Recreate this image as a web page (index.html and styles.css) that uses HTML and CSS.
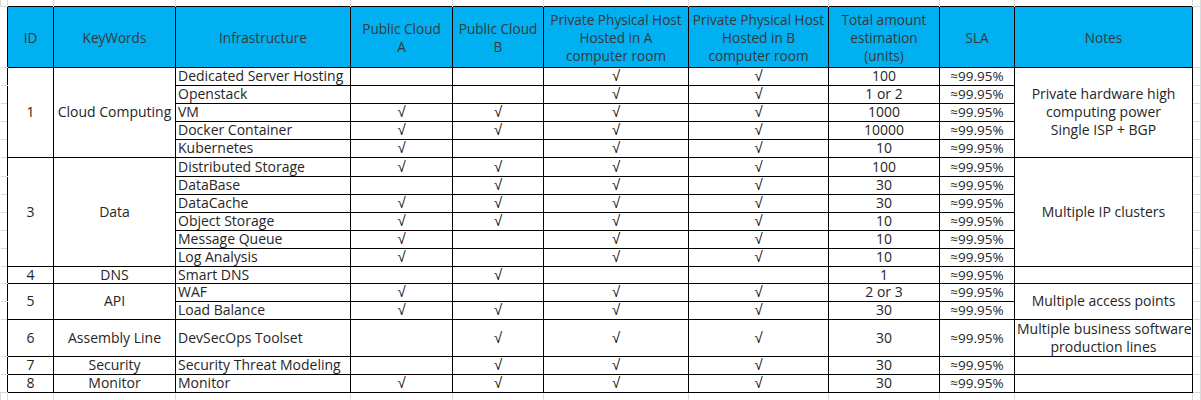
FILE: index.html
```html
<!DOCTYPE html>
<html>
<head>
<meta charset="utf-8">
<link rel="stylesheet" href="styles.css">
</head>
<body>
<table class="sheet">
<colgroup>
<col class="c-ml"><col class="c-id"><col class="c-kw"><col class="c-inf"><col class="c-pa"><col class="c-pb"><col class="c-ha"><col class="c-hb"><col class="c-tot"><col class="c-sla"><col class="c-note"><col class="c-mr">
</colgroup>
<tr class="r-top"><td class="mt"></td><td class="mt"></td><td class="mt"></td><td class="mt"></td><td class="mt"></td><td class="mt"></td><td class="mt"></td><td class="mt"></td><td class="mt"></td><td class="mt"></td><td class="mt"></td><td class="mt"></td></tr>
<tr class="r-head">
<td class="ml"></td>
<th>ID</th>
<th>KeyWords</th>
<th>Infrastructure</th>
<th>Public Cloud<br>A</th>
<th>Public Cloud<br>B</th>
<th>Private Physical Host<br>Hosted in A<br>computer room</th>
<th>Private Physical Host<br>Hosted in B<br>computer room</th>
<th>Total amount<br>estimation<br>(units)</th>
<th>SLA</th>
<th>Notes</th>
<td class="mr"></td>
</tr>

<tr><td class="ml"></td><td rowspan="5">1</td><td rowspan="5">Cloud Computing</td><td class="inf">Dedicated Server Hosting</td><td></td><td></td><td><span class="ck">√</span></td><td><span class="ck">√</span></td><td>100</td><td class="sla">≈99.95%</td><td rowspan="5" class="note">Private hardware high<br>computing power<br>Single ISP + BGP</td><td class="mr"></td></tr>
<tr><td class="ml"></td><td class="inf">Openstack</td><td></td><td></td><td><span class="ck">√</span></td><td><span class="ck">√</span></td><td>1 or 2</td><td class="sla">≈99.95%</td><td class="mr"></td></tr>
<tr><td class="ml"></td><td class="inf">VM</td><td><span class="ck">√</span></td><td><span class="ck">√</span></td><td><span class="ck">√</span></td><td><span class="ck">√</span></td><td>1000</td><td class="sla">≈99.95%</td><td class="mr"></td></tr>
<tr><td class="ml"></td><td class="inf">Docker Container</td><td><span class="ck">√</span></td><td><span class="ck">√</span></td><td><span class="ck">√</span></td><td><span class="ck">√</span></td><td>10000</td><td class="sla">≈99.95%</td><td class="mr"></td></tr>
<tr><td class="ml"></td><td class="inf">Kubernetes</td><td><span class="ck">√</span></td><td></td><td><span class="ck">√</span></td><td><span class="ck">√</span></td><td>10</td><td class="sla">≈99.95%</td><td class="mr"></td></tr>

<tr class="r19"><td class="ml"></td><td rowspan="6">3</td><td rowspan="6">Data</td><td class="inf">Distributed Storage</td><td><span class="ck">√</span></td><td><span class="ck">√</span></td><td><span class="ck">√</span></td><td><span class="ck">√</span></td><td>100</td><td class="sla">≈99.95%</td><td rowspan="6" class="note">Multiple IP clusters</td><td class="mr"></td></tr>
<tr><td class="ml"></td><td class="inf">DataBase</td><td></td><td><span class="ck">√</span></td><td><span class="ck">√</span></td><td><span class="ck">√</span></td><td>30</td><td class="sla">≈99.95%</td><td class="mr"></td></tr>
<tr><td class="ml"></td><td class="inf">DataCache</td><td><span class="ck">√</span></td><td><span class="ck">√</span></td><td><span class="ck">√</span></td><td><span class="ck">√</span></td><td>30</td><td class="sla">≈99.95%</td><td class="mr"></td></tr>
<tr><td class="ml"></td><td class="inf">Object Storage</td><td><span class="ck">√</span></td><td><span class="ck">√</span></td><td><span class="ck">√</span></td><td><span class="ck">√</span></td><td>10</td><td class="sla">≈99.95%</td><td class="mr"></td></tr>
<tr><td class="ml"></td><td class="inf">Message Queue</td><td><span class="ck">√</span></td><td></td><td><span class="ck">√</span></td><td><span class="ck">√</span></td><td>10</td><td class="sla">≈99.95%</td><td class="mr"></td></tr>
<tr><td class="ml"></td><td class="inf">Log Analysis</td><td><span class="ck">√</span></td><td></td><td><span class="ck">√</span></td><td><span class="ck">√</span></td><td>10</td><td class="sla">≈99.95%</td><td class="mr"></td></tr>

<tr class="r17"><td class="ml"></td><td>4</td><td>DNS</td><td class="inf">Smart DNS</td><td></td><td><span class="ck">√</span></td><td></td><td></td><td>1</td><td class="sla">≈99.95%</td><td class="note"></td><td class="mr"></td></tr>

<tr><td class="ml"></td><td rowspan="2">5</td><td rowspan="2">API</td><td class="inf">WAF</td><td><span class="ck">√</span></td><td></td><td><span class="ck">√</span></td><td><span class="ck">√</span></td><td>2 or 3</td><td class="sla">≈99.95%</td><td rowspan="2" class="note">Multiple access points</td><td class="mr"></td></tr>
<tr><td class="ml"></td><td class="inf">Load Balance</td><td><span class="ck">√</span></td><td><span class="ck">√</span></td><td><span class="ck">√</span></td><td><span class="ck">√</span></td><td>30</td><td class="sla">≈99.95%</td><td class="mr"></td></tr>

<tr class="r37"><td class="ml"></td><td>6</td><td>Assembly Line</td><td class="inf">DevSecOps Toolset</td><td></td><td><span class="ck">√</span></td><td><span class="ck">√</span></td><td><span class="ck">√</span></td><td>30</td><td class="sla">≈99.95%</td><td class="note">Multiple business software<br>production lines</td><td class="mr"></td></tr>

<tr><td class="ml"></td><td>7</td><td>Security</td><td class="inf">Security Threat Modeling</td><td></td><td><span class="ck">√</span></td><td><span class="ck">√</span></td><td><span class="ck">√</span></td><td>30</td><td class="sla">≈99.95%</td><td class="note"></td><td class="mr"></td></tr>
<tr><td class="ml"></td><td>8</td><td>Monitor</td><td class="inf">Monitor</td><td><span class="ck">√</span></td><td><span class="ck">√</span></td><td><span class="ck">√</span></td><td><span class="ck">√</span></td><td>30</td><td class="sla">≈99.95%</td><td class="note"></td><td class="mr"></td></tr>

<tr class="r-bottom"><td class="mb ml"></td><td class="mb"></td><td class="mb"></td><td class="mb"></td><td class="mb"></td><td class="mb"></td><td class="mb"></td><td class="mb"></td><td class="mb"></td><td class="mb"></td><td class="mb"></td><td class="mb mr"></td></tr>
</table>
</body>
</html>
```

FILE: styles.css
```css
body {
  margin: 0;
  background: #ffffff;
  font-family: "Open Sans", "Noto Sans", sans-serif;
  font-size: 14px;
  color: #262626;
}

.sheet {
  border-collapse: collapse;
  table-layout: fixed;
  width: 1200px;
}

.c-ml { width: 7px; }
.c-id { width: 46px; }
.c-kw { width: 122px; }
.c-inf { width: 175px; }
.c-pa { width: 102px; }
.c-pb { width: 91px; }
.c-ha { width: 145px; }
.c-hb { width: 140px; }
.c-tot { width: 111px; }
.c-sla { width: 75px; }
.c-note { width: 178px; }
.c-mr { width: 8px; }

.sheet tr { height: 18px; }
.sheet tr.r-top { height: 6px; }
.sheet tr.r-head { height: 61px; }
.sheet tr.r19 { height: 19px; }
.sheet tr.r17 { height: 17px; }
.sheet tr.r37 { height: 37px; }
.sheet tr.r-bottom { height: 18px; }

.sheet td,
.sheet th {
  border: 1px solid #000000;
  padding: 0 2px;
  height: 16px;
  line-height: 16px;
  text-align: center;
  vertical-align: middle;
  font-weight: normal;
  white-space: nowrap;
  overflow: hidden;
}

.sheet th {
  background: #00b0f0;
  color: #383838;
  font-size: 13.6px;
  line-height: 18px;
  padding-top: 2px;
}

.sheet td.inf {
  text-align: left;
}

.sheet td.note {
  line-height: 18px;
}

.sheet td.sla {
  font-size: 13.5px;
}

.ck {
  font-family: "Liberation Sans", sans-serif;
  font-size: 15px;
  color: #111111;
}

.sheet td.mt {
  border-top: none;
  border-bottom: none;
  border-left: 1px solid #dadada;
  border-right: 1px solid #dadada;
  padding: 0;
  height: 5px;
}

.sheet td.ml {
  border-left: none;
  border-right: none;
  border-top: 1px solid #dadada;
  border-bottom: 1px solid #dadada;
  padding: 0;
}

.sheet td.mr {
  border-left: none;
  border-right: 1px solid #dadada;
  border-top: 1px solid #dadada;
  border-bottom: 1px solid #dadada;
  padding: 0;
}

.sheet td.mb {
  border-top: none;
  border-bottom: none;
  border-left: 1px solid #dadada;
  border-right: 1px solid #dadada;
  padding: 0;
}
```
